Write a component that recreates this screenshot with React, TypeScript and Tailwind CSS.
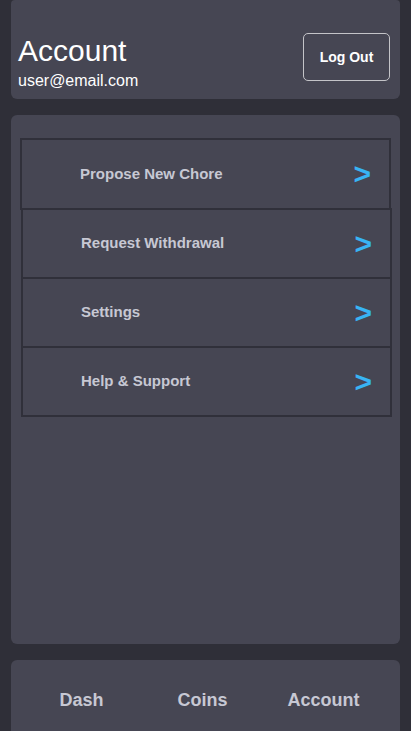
import React from "react";

const items = ["Propose New Chore", "Request Withdrawal", "Settings", "Help & Support"];

export default function App() {
  return (
    <div
      className="min-h-screen bg-[#2f2f38] px-[11px]"
      style={{ fontFamily: "'Liberation Sans', Arial, sans-serif" }}
    >
      {/* Header */}
      <div className="flex h-[99px] items-start justify-between rounded-b-md rounded-t-sm bg-[#464653] pl-[7px] pr-[10px] pt-[34px]">
        <div>
          <h1 className="text-[30px] leading-[34px] text-white">Account</h1>
          <p className="mt-[4px] text-[16px] leading-[18px] text-white">user@email.com</p>
        </div>
        <button className="-mt-px flex h-[48px] w-[87px] items-center justify-center rounded-[5px] border border-[#c4c4c8] text-[14px] font-bold text-white">
          Log Out
        </button>
      </div>

      {/* Menu */}
      <div className="mt-[16px] h-[529px] rounded-md bg-[#464653] pl-[10px] pr-[8px] pt-[23px]">
        {items.map((label, i) => (
          <div
            key={label}
            className={
              i === 0
                ? "-ml-px mr-px flex h-[72px] items-center justify-between border-2 border-[#30303a] pl-[58px] pr-[18px]"
                : "-mt-[2px] flex h-[71px] items-center justify-between border-2 border-[#30303a] pl-[58px] pr-[18px]"
            }
          >
            <span className="text-[15px] font-bold text-[#c7c8d3]">{label}</span>
            <span className="text-[30px] font-bold leading-none text-[#38b4f4]">&gt;</span>
          </div>
        ))}
      </div>

      {/* Bottom nav */}
      <div className="mt-[16px] grid h-[80px] grid-cols-3 items-center rounded-md bg-[#464653] pl-[10px] pr-[16px] text-center text-[18px] font-bold text-[#c7c8d3]">
        <span>Dash</span>
        <span>Coins</span>
        <span>Account</span>
      </div>
    </div>
  );
}
